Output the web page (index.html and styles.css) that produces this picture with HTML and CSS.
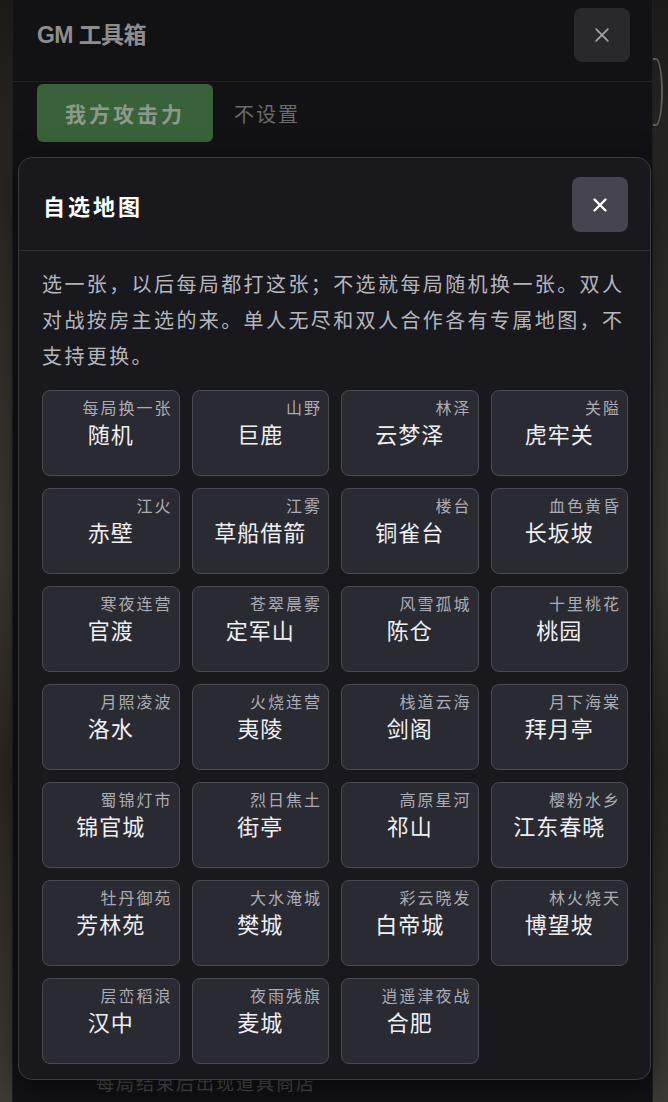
FILE: index.html
```html
<!DOCTYPE html>
<html lang="zh-CN">
<head>
  <meta charset="UTF-8">
  <meta name="viewport" content="width=device-width, initial-scale=1.0">
  <title>GM 工具箱 - 自选地图</title>
  <link rel="stylesheet" href="styles.css">
</head>
<body>
  <div class="scene-arc"></div>

  <!-- GM toolbox panel (behind the dialog) -->
  <div class="toolbox">
    <div class="toolbox-header">
      <h1>GM 工具箱</h1>
      <button class="close-btn dim">
        <svg viewBox="0 0 24 24" width="20" height="20"><path d="M5 5 L19 19 M19 5 L5 19" stroke="currentColor" stroke-width="2.2" stroke-linecap="round"/></svg>
      </button>
    </div>
    <div class="toolbox-row">
      <button class="stat-btn">我方攻击力</button>
      <span class="stat-value">不设置</span>
    </div>
    <p class="toolbox-note">每局结束后出现道具商店</p>
  </div>

  <!-- Map picker dialog -->
  <div class="modal">
    <div class="modal-header">
      <h2>自选地图</h2>
      <button class="close-btn">
        <svg viewBox="0 0 24 24" width="22" height="22"><path d="M6 6 L18 18 M18 6 L6 18" stroke="currentColor" stroke-width="2.6" stroke-linecap="round"/></svg>
      </button>
    </div>
    <div class="modal-body">
      <p class="desc">选一张，以后每局都打这张；不选就每局随机换一张。双人对战按房主选的来。单人无尽和双人合作各有专属地图，不支持更换。</p>
      <div class="map-grid" id="map-grid"></div>
    </div>
  </div>

  <script>
    const maps = [
      ["每局换一张", "随机"], ["山野", "巨鹿"], ["林泽", "云梦泽"], ["关隘", "虎牢关"],
      ["江火", "赤壁"], ["江雾", "草船借箭"], ["楼台", "铜雀台"], ["血色黄昏", "长坂坡"],
      ["寒夜连营", "官渡"], ["苍翠晨雾", "定军山"], ["风雪孤城", "陈仓"], ["十里桃花", "桃园"],
      ["月照凌波", "洛水"], ["火烧连营", "夷陵"], ["栈道云海", "剑阁"], ["月下海棠", "拜月亭"],
      ["蜀锦灯市", "锦官城"], ["烈日焦土", "街亭"], ["高原星河", "祁山"], ["樱粉水乡", "江东春晓"],
      ["牡丹御苑", "芳林苑"], ["大水淹城", "樊城"], ["彩云晓发", "白帝城"], ["林火烧天", "博望坡"],
      ["层峦稻浪", "汉中"], ["夜雨残旗", "麦城"], ["逍遥津夜战", "合肥"]
    ];

    const grid = document.getElementById("map-grid");
    maps.forEach(([sub, name]) => {
      grid.innerHTML += `
        <button class="tile">
          <span class="tile-sub">${sub}</span>
          <span class="tile-name">${name}</span>
        </button>
      `;
    });
  </script>
</body>
</html>
```

FILE: styles.css
```css
* {
  box-sizing: border-box;
}

html,
body {
  overflow: hidden;
}

body {
  margin: 0;
  height: 1102px;
  position: relative;
  font-family: "Noto Sans CJK SC", "Noto Sans", sans-serif;
  background: linear-gradient(180deg, #1c1a18 0%, #2f2b27 25%, #3b3732 50%, #2a2520 70%, #3e3a34 100%);
  padding: 0 15px 0 12px;
}

button {
  font-family: inherit;
  cursor: pointer;
}

.scene-arc {
  position: absolute;
  right: 5px;
  top: 58px;
  width: 14px;
  height: 68px;
  border: 2px solid #5e5a54;
  border-left: none;
  border-radius: 0 50% 50% 0 / 0 50% 50% 0;
}

/* background panel */
.toolbox {
  height: 100%;
  background: #121215;
  border-left: 1px solid #1f1f22;
  border-right: 1px solid #1f1f22;
  display: flex;
  flex-direction: column;
  position: relative;
}

.toolbox-header {
  height: 82px;
  display: flex;
  justify-content: space-between;
  align-items: flex-start;
  padding: 8px 22px 0 24px;
  border-bottom: 1px solid #222226;
}

.toolbox-header h1 {
  margin: 15px 0 0;
  font-family: "Liberation Sans", "Noto Sans CJK SC", sans-serif;
  font-size: 23px;
  line-height: 24px;
  font-weight: 700;
  color: #8e8e8e;
  letter-spacing: -0.6px;
}

.close-btn {
  width: 56px;
  height: 55px;
  border: none;
  border-radius: 8px;
  background: #45444f;
  color: #fff;
  display: flex;
  align-items: center;
  justify-content: center;
  padding: 0;
}

.close-btn.dim {
  height: 54px;
  background: #29292d;
  color: #a2a2a2;
}

.toolbox-row {
  display: flex;
  align-items: center;
  gap: 21px;
  padding: 2px 0 0 24px;
}

.stat-btn {
  width: 176px;
  height: 58px;
  border: none;
  border-radius: 6px;
  background: #39613a;
  color: #8d9a8a;
  font-size: 21px;
  font-weight: 700;
  letter-spacing: 3px;
}

.stat-value {
  font-size: 20px;
  color: #6a6a6a;
  letter-spacing: 2px;
}

.toolbox-note {
  margin: auto 0 10px 83px;
  font-size: 18px;
  line-height: 20px;
  color: #4b4b4e;
  letter-spacing: 2px;
}

/* dialog */
.modal {
  position: absolute;
  left: 18px;
  top: 157px;
  width: 633px;
  background: #18181d;
  border: 1px solid #3a3a40;
  border-radius: 14px;
  box-shadow: 0 8px 30px rgba(0, 0, 0, 0.5);
}

.modal-header {
  display: flex;
  justify-content: space-between;
  align-items: center;
  padding: 19px 22px 18px 24px;
  border-bottom: 1px solid #2f2f35;
}

.modal-header h2 {
  margin: 0;
  font-size: 22px;
  font-weight: 700;
  color: #fff;
  letter-spacing: 3px;
}

.modal-body {
  padding: 15px 22px 15px 23px;
}

.desc {
  margin: 0 0 16px;
  font-size: 20px;
  line-height: 36px;
  color: #b6b6bd;
  letter-spacing: 2.4px;
}

.map-grid {
  display: grid;
  grid-template-columns: repeat(4, 1fr);
  gap: 12px;
}

.tile {
  height: 86px;
  padding: 6px 8px;
  display: flex;
  flex-direction: column;
  background: #2a2a32;
  border: 1px solid #4a4a52;
  border-radius: 8px;
  color: #eee;
  text-align: center;
}

.tile-sub {
  text-align: right;
  font-size: 16px;
  line-height: 20px;
  color: #acacb3;
  letter-spacing: 2px;
  margin-right: -2px;
}

.tile-name {
  margin-top: 1px;
  font-size: 22px;
  line-height: 30px;
  color: #f0f0f2;
  letter-spacing: 1px;
}
```
